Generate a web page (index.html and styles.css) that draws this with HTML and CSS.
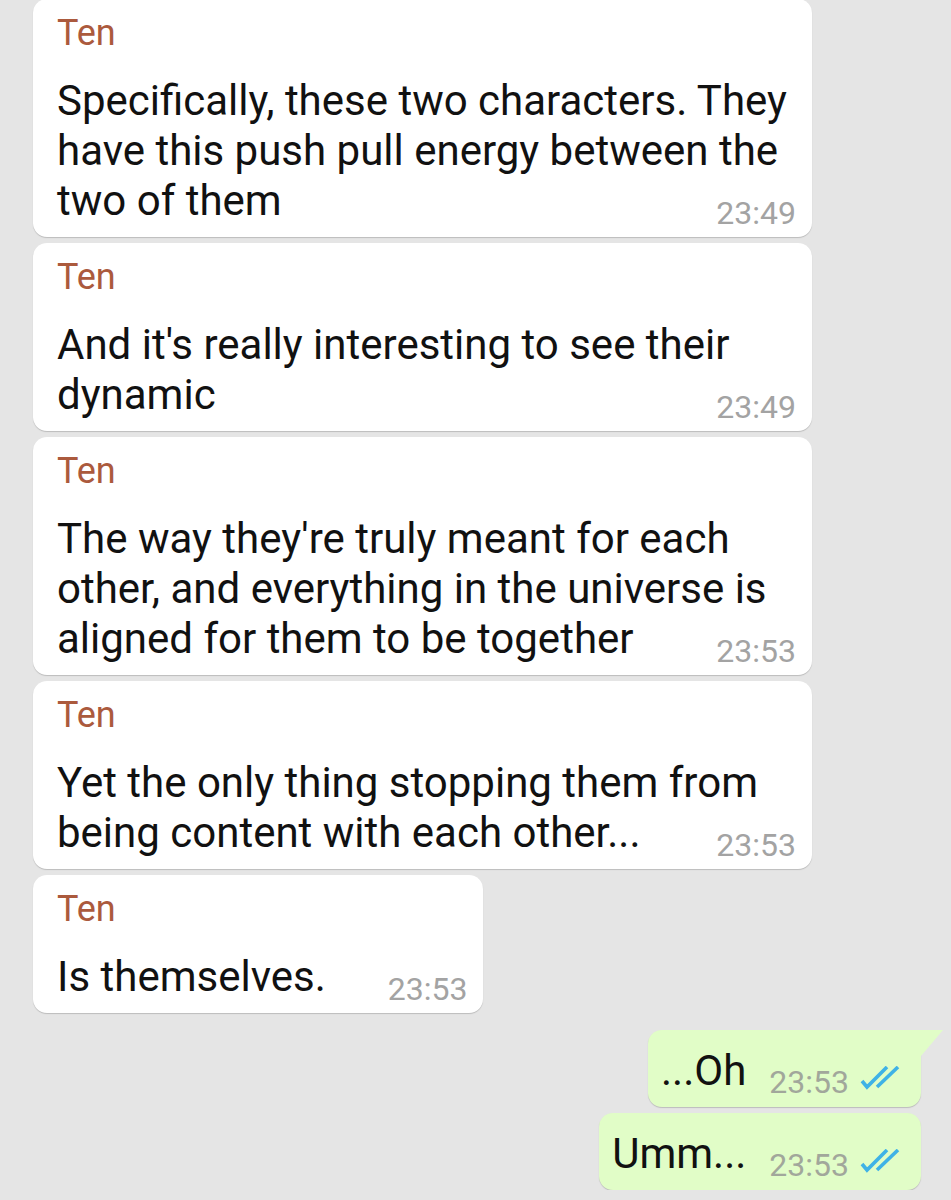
FILE: index.html
```html
<!DOCTYPE html>
<html lang="en">
<head>
    <meta charset="UTF-8">
    <meta name="viewport" content="width=device-width, initial-scale=1.0">
    <title>Chat</title>
    <link rel="stylesheet" href="styles.css">
</head>
<body>
    <div class="chat">
        <div class="bubble in">
            <div class="name">Ten</div>
            <p class="text">Specifically, these two characters. They have this push pull energy between the two of them<span class="time">23:49</span></p>
        </div>
        <div class="bubble in">
            <div class="name">Ten</div>
            <p class="text">And it's really interesting to see their dynamic<span class="time">23:49</span></p>
        </div>
        <div class="bubble in">
            <div class="name">Ten</div>
            <p class="text">The way they're truly meant for each other, and everything in the universe is aligned for them to be together<span class="time">23:53</span></p>
        </div>
        <div class="bubble in">
            <div class="name">Ten</div>
            <p class="text">Yet the only thing stopping them from being content with each other...<span class="time">23:53</span></p>
        </div>
        <div class="bubble in">
            <div class="name">Ten</div>
            <p class="text">Is themselves.<span class="time">23:53</span></p>
        </div>

        <div class="bubble out first">
            <span class="text">...Oh</span>
            <span class="time-out">23:53</span>
            <svg class="ticks" width="40" height="26" viewBox="0 0 40 26">
                <path d="M2 15 L7 21 L27 1" />
                <path d="M17 21 L38 1" />
            </svg>
        </div>
        <div class="bubble out">
            <span class="text">Umm...</span>
            <span class="time-out">23:53</span>
            <svg class="ticks" width="40" height="26" viewBox="0 0 40 26">
                <path d="M2 15 L7 21 L27 1" />
                <path d="M17 21 L38 1" />
            </svg>
        </div>
    </div>
</body>
</html>
```

FILE: styles.css
```css
body {
    margin: 0;
    background: #e5e5e5;
    font-family: Roboto, "Noto Sans", sans-serif;
}
.chat {
    display: flex;
    flex-direction: column;
    gap: 6px;
    padding: 0 30px 0 33px;
    margin-top: -1px;
}
.bubble {
    border-radius: 14px;
    box-shadow: 0 1px 1px rgba(0, 0, 0, 0.18);
}
.bubble.in {
    align-self: flex-start;
    max-width: 779px;
    box-sizing: border-box;
    background: #fff;
    padding: 14px 16px 8px 24px;
}
.name {
    font-size: 36px;
    line-height: 40px;
    color: #ab5a3d;
    margin-bottom: 23px;
}
.text {
    margin: 0;
    font-size: 42px;
    line-height: 50px;
    color: #111;
}
.time {
    float: right;
    font-size: 32px;
    line-height: 32px;
    margin: 21px 0 0 62px;
    color: #a3a3a3;
}
.bubble.out {
    position: relative;
    align-self: flex-end;
    display: flex;
    align-items: flex-end;
    background: #e1fdc7;
    padding: 16px 21px 11px 13px;
}
.bubble.out.first {
    margin-top: 11px;
    border-top-right-radius: 0;
}
.bubble.out.first::after {
    content: "";
    position: absolute;
    top: 0;
    left: 100%;
    width: 22px;
    height: 26px;
    background: #e1fdc7;
    clip-path: polygon(0 0, 100% 0, 0 100%);
}
.time-out {
    font-size: 32px;
    line-height: 28px;
    color: #a1a79b;
    margin-left: 23px;
}
.ticks {
    margin: 0 0 4px 11px;
    fill: none;
    stroke: #3fb2e6;
    stroke-width: 3.6;
}
```
